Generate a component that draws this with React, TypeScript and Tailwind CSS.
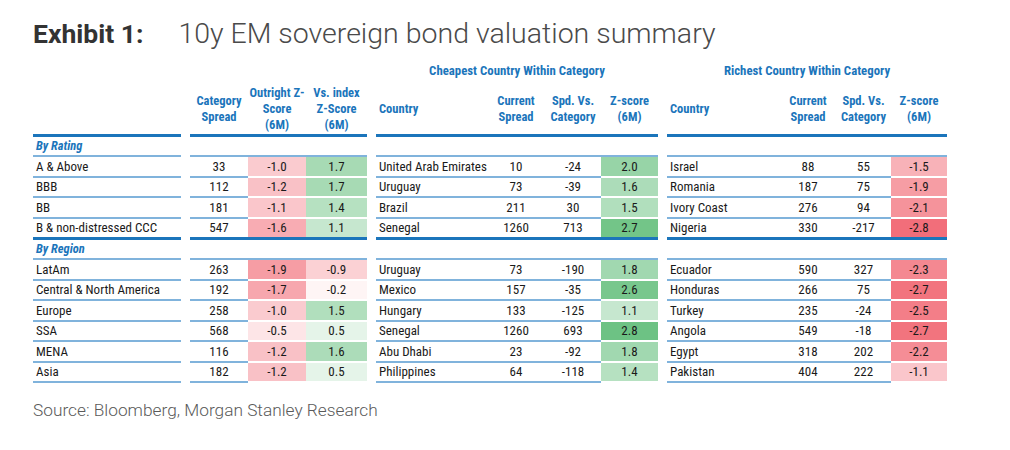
import React from 'react';

type Row = {
  label: string;
  cat: number;
  out: number;
  vs: number;
  cc: string;
  cs: number;
  cd: number;
  cz: number;
  rc: string;
  rs: number;
  rd: number;
  rz: number;
};

const RATING: Row[] = [
  { label: 'A & Above', cat: 33, out: -1.0, vs: 1.7, cc: 'United Arab Emirates', cs: 10, cd: -24, cz: 2.0, rc: 'Israel', rs: 88, rd: 55, rz: -1.5 },
  { label: 'BBB', cat: 112, out: -1.2, vs: 1.7, cc: 'Uruguay', cs: 73, cd: -39, cz: 1.6, rc: 'Romania', rs: 187, rd: 75, rz: -1.9 },
  { label: 'BB', cat: 181, out: -1.1, vs: 1.4, cc: 'Brazil', cs: 211, cd: 30, cz: 1.5, rc: 'Ivory Coast', rs: 276, rd: 94, rz: -2.1 },
  { label: 'B & non-distressed CCC', cat: 547, out: -1.6, vs: 1.1, cc: 'Senegal', cs: 1260, cd: 713, cz: 2.7, rc: 'Nigeria', rs: 330, rd: -217, rz: -2.8 },
];

const REGION: Row[] = [
  { label: 'LatAm', cat: 263, out: -1.9, vs: -0.9, cc: 'Uruguay', cs: 73, cd: -190, cz: 1.8, rc: 'Ecuador', rs: 590, rd: 327, rz: -2.3 },
  { label: 'Central & North America', cat: 192, out: -1.7, vs: -0.2, cc: 'Mexico', cs: 157, cd: -35, cz: 2.6, rc: 'Honduras', rs: 266, rd: 75, rz: -2.7 },
  { label: 'Europe', cat: 258, out: -1.0, vs: 1.5, cc: 'Hungary', cs: 133, cd: -125, cz: 1.1, rc: 'Turkey', rs: 235, rd: -24, rz: -2.5 },
  { label: 'SSA', cat: 568, out: -0.5, vs: 0.5, cc: 'Senegal', cs: 1260, cd: 693, cz: 2.8, rc: 'Angola', rs: 549, rd: -18, rz: -2.7 },
  { label: 'MENA', cat: 116, out: -1.2, vs: 1.6, cc: 'Abu Dhabi', cs: 23, cd: -92, cz: 1.8, rc: 'Egypt', rs: 318, rd: 202, rz: -2.2 },
  { label: 'Asia', cat: 182, out: -1.2, vs: 0.5, cc: 'Philippines', cs: 64, cd: -118, cz: 1.4, rc: 'Pakistan', rs: 404, rd: 222, rz: -1.1 },
];

// excel style 3-colour scale, white in the middle
function heat(v: number) {
  const t = Math.min(Math.abs(v) / 3, 1);
  const to = v < 0 ? [241, 100, 112] : [99, 190, 123];
  const [r, g, b] = to.map((x) => Math.round(255 + (x - 255) * t));
  return `rgb(${r},${g},${b})`;
}

const fmt = (v: number) => v.toFixed(1);

function Rule({ thick }: { thick?: boolean }) {
  const h = thick ? 'h-[3px] bg-[#1b75bb]' : 'h-[2px] bg-[#80b3dc]';
  return (
    <div className="flex gap-[9px]">
      <div className={`w-[148px] ${h}`} />
      <div className={`w-[177px] ${h}`} />
      <div className={`w-[282px] ${h}`} />
      <div className={`w-[280px] ${h}`} />
    </div>
  );
}

function Txt({ w, left, sep, children }: { w: string; left?: boolean; sep: boolean; children: React.ReactNode }) {
  return (
    <div
      className={`flex items-center ${w} ${left ? 'justify-start pl-[3px]' : 'justify-center'} ${
        sep ? 'h-[20.5px] border-b-2 border-[#80b3dc]' : 'h-[18.5px]'
      }`}
    >
      {children}
    </div>
  );
}

function Heat({ w, v, sep }: { w: string; v: number; sep: boolean }) {
  return (
    <div
      className={`flex items-center justify-center bg-clip-padding ${w} ${
        sep ? 'h-[20.5px] border-b-2 border-white' : 'h-[18.5px]'
      }`}
      style={{ backgroundColor: heat(v) }}
    >
      {fmt(v)}
    </div>
  );
}

function DataRow({ r, sep }: { r: Row; sep: boolean }) {
  return (
    <div className="flex gap-[9px]">
      <div className="flex w-[148px]">
        <Txt w="w-[148px]" left sep={sep}>{r.label}</Txt>
      </div>
      <div className="flex w-[177px]">
        <Txt w="w-[58px]" sep={sep}>{r.cat}</Txt>
        <Heat w="w-[58px]" v={r.out} sep={sep} />
        <Heat w="w-[61px]" v={r.vs} sep={sep} />
      </div>
      <div className="flex w-[282px]">
        <Txt w="w-[111px]" left sep={sep}>{r.cc}</Txt>
        <Txt w="w-[58px]" sep={sep}>{r.cs}</Txt>
        <Txt w="w-[56px]" sep={sep}>{r.cd}</Txt>
        <Heat w="w-[57px]" v={r.cz} sep={sep} />
      </div>
      <div className="flex w-[280px]">
        <Txt w="w-[113px]" left sep={sep}>{r.rc}</Txt>
        <Txt w="w-[56px]" sep={sep}>{r.rs}</Txt>
        <Txt w="w-[55px]" sep={sep}>{r.rd}</Txt>
        <Heat w="w-[56px]" v={r.rz} sep={sep} />
      </div>
    </div>
  );
}

function GroupLabel({ children }: { children: string }) {
  return (
    <div className="flex h-[18px] items-center pl-[3px] text-[12.5px] font-bold italic text-[#1b75bb]">
      {children}
    </div>
  );
}

function Head({ w, left, lines }: { w: string; left?: boolean; lines: string[] }) {
  return (
    <div
      className={`flex h-[50px] flex-col justify-center overflow-hidden whitespace-nowrap leading-[16px] ${w} ${
        left ? 'items-start pl-[3px]' : 'items-center'
      }`}
    >
      {lines.map((l) => (
        <span key={l}>{l}</span>
      ))}
    </div>
  );
}

export default function App() {
  return (
    <div className="min-h-[450px] w-[1010px] bg-white pl-[33px] pt-[19px] font-['Roboto',sans-serif]">
      <h1 className="flex h-[30px] items-baseline leading-[30px]">
        <span className="text-[26.5px] font-bold text-[#333333]">Exhibit 1:</span>
        <span className="ml-[35px] text-[28.5px] font-light text-[#4a4a4a]">10y EM sovereign bond valuation summary</span>
      </h1>

      <div className="mt-[15px] font-['Roboto_Condensed','Liberation_Sans_Narrow','Roboto',sans-serif] font-stretch-condensed">
        <div className="flex h-[14px] items-center gap-[9px] text-[12.8px] font-bold text-[#1b75bb]">
          <div className="w-[148px]" />
          <div className="w-[177px]" />
          <div className="w-[282px] text-center">Cheapest Country Within Category</div>
          <div className="w-[280px] text-center">Richest Country Within Category</div>
        </div>

        <div className="mt-[6px] flex gap-[9px] text-[12.5px] font-bold text-[#1b75bb]">
          <div className="w-[148px]" />
          <div className="flex w-[177px]">
            <Head w="w-[58px]" lines={['Category', 'Spread']} />
            <Head w="w-[58px]" lines={['Outright Z-', 'Score', '(6M)']} />
            <Head w="w-[61px]" lines={['Vs. index', 'Z-Score', '(6M)']} />
          </div>
          <div className="flex w-[282px]">
            <Head w="w-[111px]" left lines={['Country']} />
            <Head w="w-[58px]" lines={['Current', 'Spread']} />
            <Head w="w-[56px]" lines={['Spd. Vs.', 'Category']} />
            <Head w="w-[57px]" lines={['Z-score', '(6M)']} />
          </div>
          <div className="flex w-[280px]">
            <Head w="w-[113px]" left lines={['Country']} />
            <Head w="w-[56px]" lines={['Current', 'Spread']} />
            <Head w="w-[55px]" lines={['Spd. Vs.', 'Category']} />
            <Head w="w-[56px]" lines={['Z-score', '(6M)']} />
          </div>
        </div>
        <Rule thick />

        <div className="text-[13px] text-[#1a1a1a]">
          <GroupLabel>By Rating</GroupLabel>
          <Rule />
          {RATING.map((r, i) => (
            <DataRow key={r.label} r={r} sep={i < RATING.length - 1} />
          ))}
          <Rule thick />
          <GroupLabel>By Region</GroupLabel>
          <Rule />
          {REGION.map((r) => (
            <DataRow key={r.label} r={r} sep />
          ))}
        </div>
      </div>

      <p className="mt-[17px] text-[17.3px] font-light leading-[20px] text-[#5a5a5a]">
        Source: Bloomberg, Morgan Stanley Research
      </p>
    </div>
  );
}
